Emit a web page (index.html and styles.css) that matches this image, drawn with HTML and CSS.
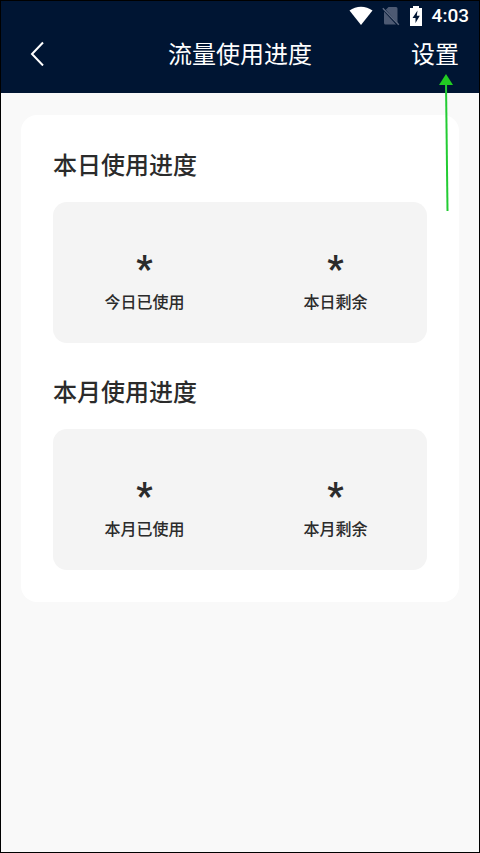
FILE: index.html
```html
<!DOCTYPE html>
<html lang="zh-CN">
<head>
    <meta charset="UTF-8">
    <meta name="viewport" content="width=device-width, initial-scale=1.0">
    <title>流量使用进度</title>
    <link rel="stylesheet" href="styles.css">
</head>
<body>
    <!-- Header -->
    <header class="header">
        <div class="status-bar">
            <svg class="status-icon" width="24" height="20" viewBox="0 0 24 20" aria-hidden="true">
                <path d="M0.5 4.5C7 -0.6 17 -0.6 23.5 4.5L12 19Z" fill="#fff"/>
            </svg>
            <svg class="status-icon" width="18" height="20" viewBox="0 0 18 20" aria-hidden="true">
                <path d="M6.500 1H14a1.500 1.500 0 0 1 1.500 1.500V17L3.800 3.700ZM2 5.500L14 18.500H3.500A1.500 1.500 0 0 1 2 17Z" fill="#4d5a73"/>
                <path d="M0.800 2.200L16.800 18.800" stroke="#5f6b82" stroke-width="1.400"/>
            </svg>
            <svg class="status-icon" width="14" height="20" viewBox="0 0 14 20" aria-hidden="true">
                <path d="M4 0H10V2H13V20H1V2H4Z" fill="#fff"/>
                <path d="M8.500 4.500L3.500 12H6.500V17L10.800 9.700H7.800Z" fill="#001533"/>
            </svg>
            <span class="time">4:03</span>
        </div>
        <nav class="nav-bar">
            <button type="button" class="back-btn" aria-label="返回">
                <svg width="14" height="26" viewBox="0 0 14 26" aria-hidden="true">
                    <path d="M13 2.500L2 14L13 25.500" fill="none" stroke="#fff" stroke-width="2"/>
                </svg>
            </button>
            <h1 class="nav-title">流量使用进度</h1>
            <a href="#" class="settings-link">设置
                <svg class="pointer-arrow" width="16" height="140" viewBox="0 0 16 140" aria-hidden="true">
                    <path d="M8 10L9.500 138" stroke="#2c3" stroke-width="2"/>
                    <path d="M8 1L15 12H1Z" fill="#2c2"/>
                </svg>
            </a>
        </nav>
    </header>

    <!-- Usage -->
    <main class="card">
        <section class="usage">
            <h2>本日使用进度</h2>
            <div class="usage-panel">
                <div class="usage-item">
                    <span class="usage-value">*</span>
                    <span class="usage-label">今日已使用</span>
                </div>
                <div class="usage-item">
                    <span class="usage-value">*</span>
                    <span class="usage-label">本日剩余</span>
                </div>
            </div>
        </section>
        <section class="usage">
            <h2>本月使用进度</h2>
            <div class="usage-panel">
                <div class="usage-item">
                    <span class="usage-value">*</span>
                    <span class="usage-label">本月已使用</span>
                </div>
                <div class="usage-item">
                    <span class="usage-value">*</span>
                    <span class="usage-label">本月剩余</span>
                </div>
            </div>
        </section>
    </main>
</body>
</html>
```

FILE: styles.css
```css
/* Reset and base styles */
* {
    margin: 0;
    padding: 0;
    box-sizing: border-box;
}

body {
    min-height: 100vh;
    border: 1px solid #000;
    background-color: #f9f9f9;
    color: #2b2b2b;
    font-family: "Noto Sans CJK SC", sans-serif;
}

/* Header */
.header {
    background-color: #001533;
    color: #fff;
    padding-bottom: 18px;
}

.status-bar {
    height: 30px;
    padding: 0 10px;
    display: flex;
    justify-content: flex-end;
    align-items: center;
    gap: 9px;
}

.time {
    font-family: Roboto, sans-serif;
    font-size: 19px;
    font-weight: 500;
    line-height: 30px;
}

.nav-bar {
    height: 44px;
    padding: 0 20px;
    display: grid;
    grid-template-columns: 1fr auto 1fr;
    align-items: center;
}

.back-btn {
    justify-self: start;
    padding: 0 9px;
    border: none;
    background: none;
    cursor: pointer;
}

.back-btn svg {
    display: block;
}

.nav-title,
.settings-link {
    font-size: 24px;
    font-weight: 400;
    line-height: 36px;
}

.settings-link {
    position: relative;
    justify-self: end;
    color: #fff;
    text-decoration: none;
}

/* Arrow drawn over the page, pointing at the settings link */
.pointer-arrow {
    position: absolute;
    top: 38px;
    right: 5px;
    pointer-events: none;
}

/* Card */
.card {
    margin: 22px 20px;
    padding: 31px 32px 32px;
    border-radius: 16px;
    background-color: #fff;
    display: flex;
    flex-direction: column;
    gap: 30px;
}

.usage h2 {
    margin-bottom: 20px;
    font-size: 24px;
    font-weight: 500;
    line-height: 36px;
}

.usage-panel {
    padding: 48px 0 30px;
    border-radius: 14px;
    background-color: #f4f4f4;
    display: grid;
    grid-template-columns: 1fr 1fr;
    gap: 8px;
}

.usage-item {
    display: flex;
    flex-direction: column;
    align-items: center;
}

.usage-value {
    font-family: Roboto, sans-serif;
    font-size: 36px;
    font-weight: 700;
    line-height: 39px;
}

.usage-label {
    font-size: 16px;
    font-weight: 500;
    line-height: 24px;
}
```
